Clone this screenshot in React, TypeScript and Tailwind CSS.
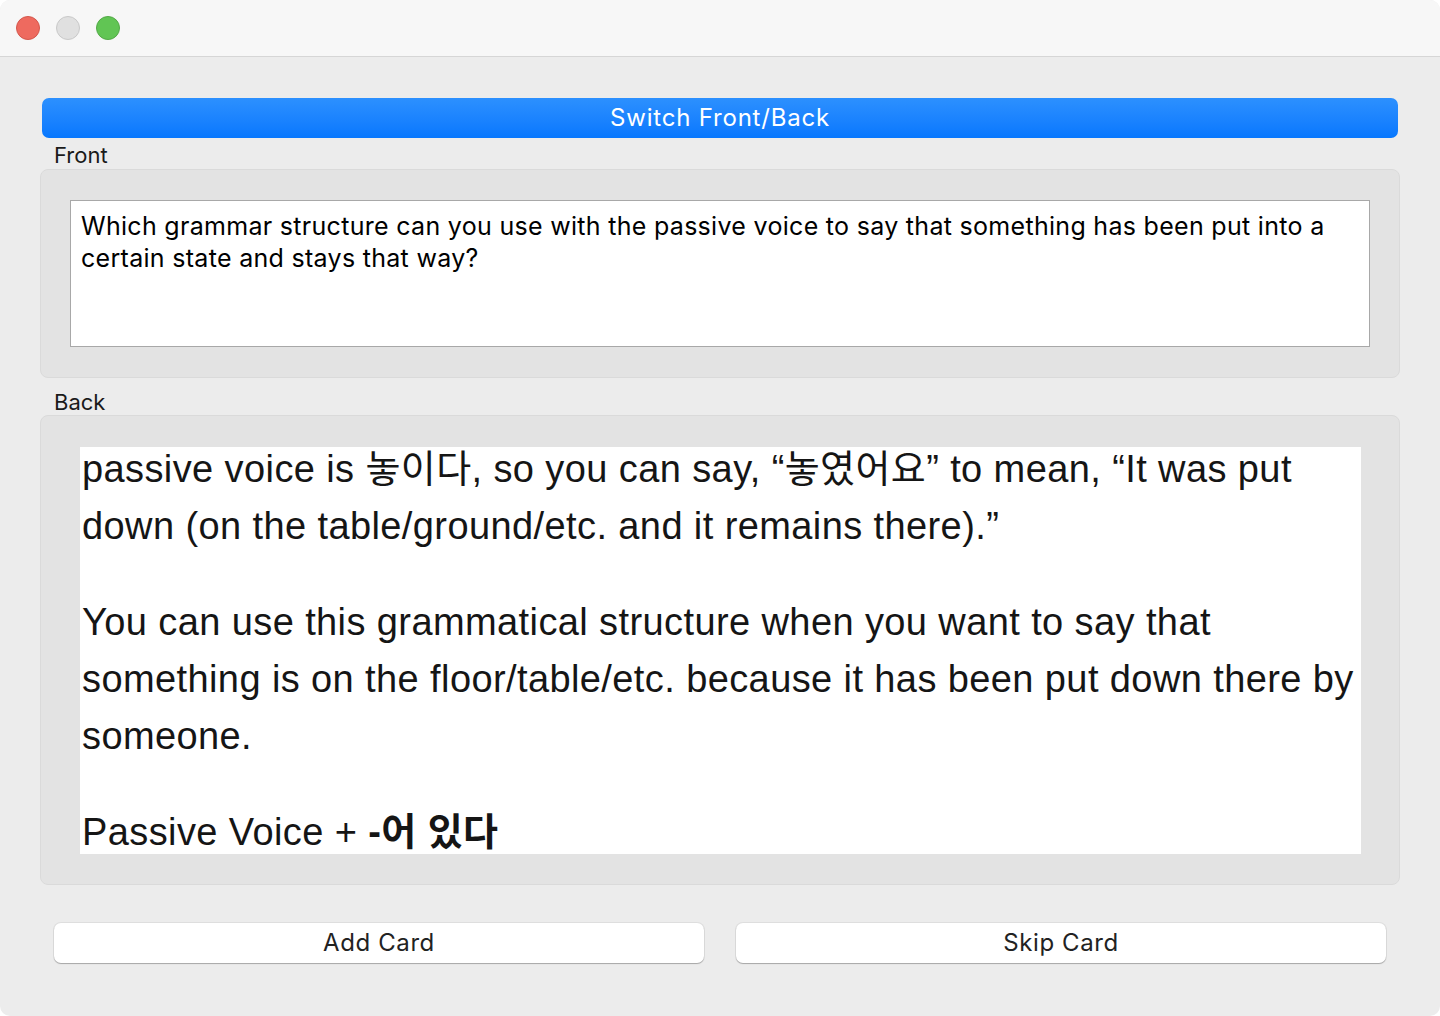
import { useState } from "react";

const ui = { fontFamily: 'Inter, "Noto Sans", "Noto Sans CJK KR", sans-serif' };
const body = { fontFamily: '"Liberation Sans", Arial, "Noto Sans CJK KR", sans-serif' };

const TrafficLights = () => (
  <div className="flex items-center gap-[16px] pl-[16px]">
    <span className="w-[24px] h-[24px] rounded-full bg-[#ee6a5f] border border-[#d4574c]" />
    <span className="w-[24px] h-[24px] rounded-full bg-[#e0e0e0] border border-[#c9c9c9]" />
    <span className="w-[24px] h-[24px] rounded-full bg-[#61c554] border border-[#53a947]" />
  </div>
);

export default function App() {
  const [flipped, setFlipped] = useState(false);

  return (
    <div className="w-[1440px] h-[1016px] bg-white" style={ui}>
      <div className="w-full h-full rounded-[10px] overflow-hidden bg-[#ececec] flex flex-col">
        {/* Barra de título */}
        <div className="h-[57px] flex-none bg-[#f7f7f7] border-b border-[#d6d6d6] flex items-center">
          <TrafficLights />
        </div>

        <div className="flex-1 flex flex-col px-[40px] pt-[41px]">
          <button
            onClick={() => setFlipped(!flipped)}
            className="mx-[2px] h-[40px] rounded-[7px] bg-gradient-to-b from-[#2c90fe] to-[#0677fe] text-white text-[24px] tracking-[0.8px] leading-none flex items-center justify-center"
          >
            Switch Front/Back
          </button>

          <div className="pl-[14px] h-[31px] text-[22px] leading-[34px] text-[#1a1a1a]">Front</div>
          <div className="h-[209px] rounded-[8px] bg-[#e3e3e3] border border-[#dadada] pt-[30px] px-[29px]">
            <div className="h-[147px] bg-white border border-[#a8a8a8] px-[10px] pt-[9px] text-[25px] tracking-[0.3px] leading-[32px] text-black">
              Which grammar structure can you use with the passive voice to say that something has been put into a certain state and stays that way?
            </div>
          </div>

          <div className="pl-[14px] h-[37px] text-[22px] leading-[48px] text-[#1a1a1a]">Back</div>
          <div className="h-[470px] rounded-[8px] bg-[#e3e3e3] border border-[#dadada] pt-[31px] pl-[39px] pr-[38px]">
            <div className="h-[407px] bg-white overflow-hidden pl-[2px] text-[38px] tracking-[0.4px] leading-[57px] text-[#151515]" style={body}>
              <p className="-mt-[6px] mb-[39px]">
                passive voice is 놓이다, so you can say, “놓였어요” to mean, “It was put down (on the table/ground/etc. and it remains there).”
              </p>
              <p className="mb-[39px]">
                You can use this grammatical structure when you want to say that something is on the floor/table/etc. because it has been put down there by someone.
              </p>
              <p>
                Passive Voice + <b>-어 있다</b>
              </p>
            </div>
          </div>

          <div className="flex gap-[32px] px-[14px] pt-[38px]">
            <button className="flex-1 h-[40px] rounded-[7px] bg-white shadow-[0_1px_1px_rgba(0,0,0,0.25),0_0_0_1px_rgba(0,0,0,0.06)] text-[24px] tracking-[0.6px] text-[#222]">
              Add Card
            </button>
            <button className="flex-1 h-[40px] rounded-[7px] bg-white shadow-[0_1px_1px_rgba(0,0,0,0.25),0_0_0_1px_rgba(0,0,0,0.06)] text-[24px] tracking-[0.6px] text-[#222]">
              Skip Card
            </button>
          </div>
        </div>
      </div>
    </div>
  );
}
